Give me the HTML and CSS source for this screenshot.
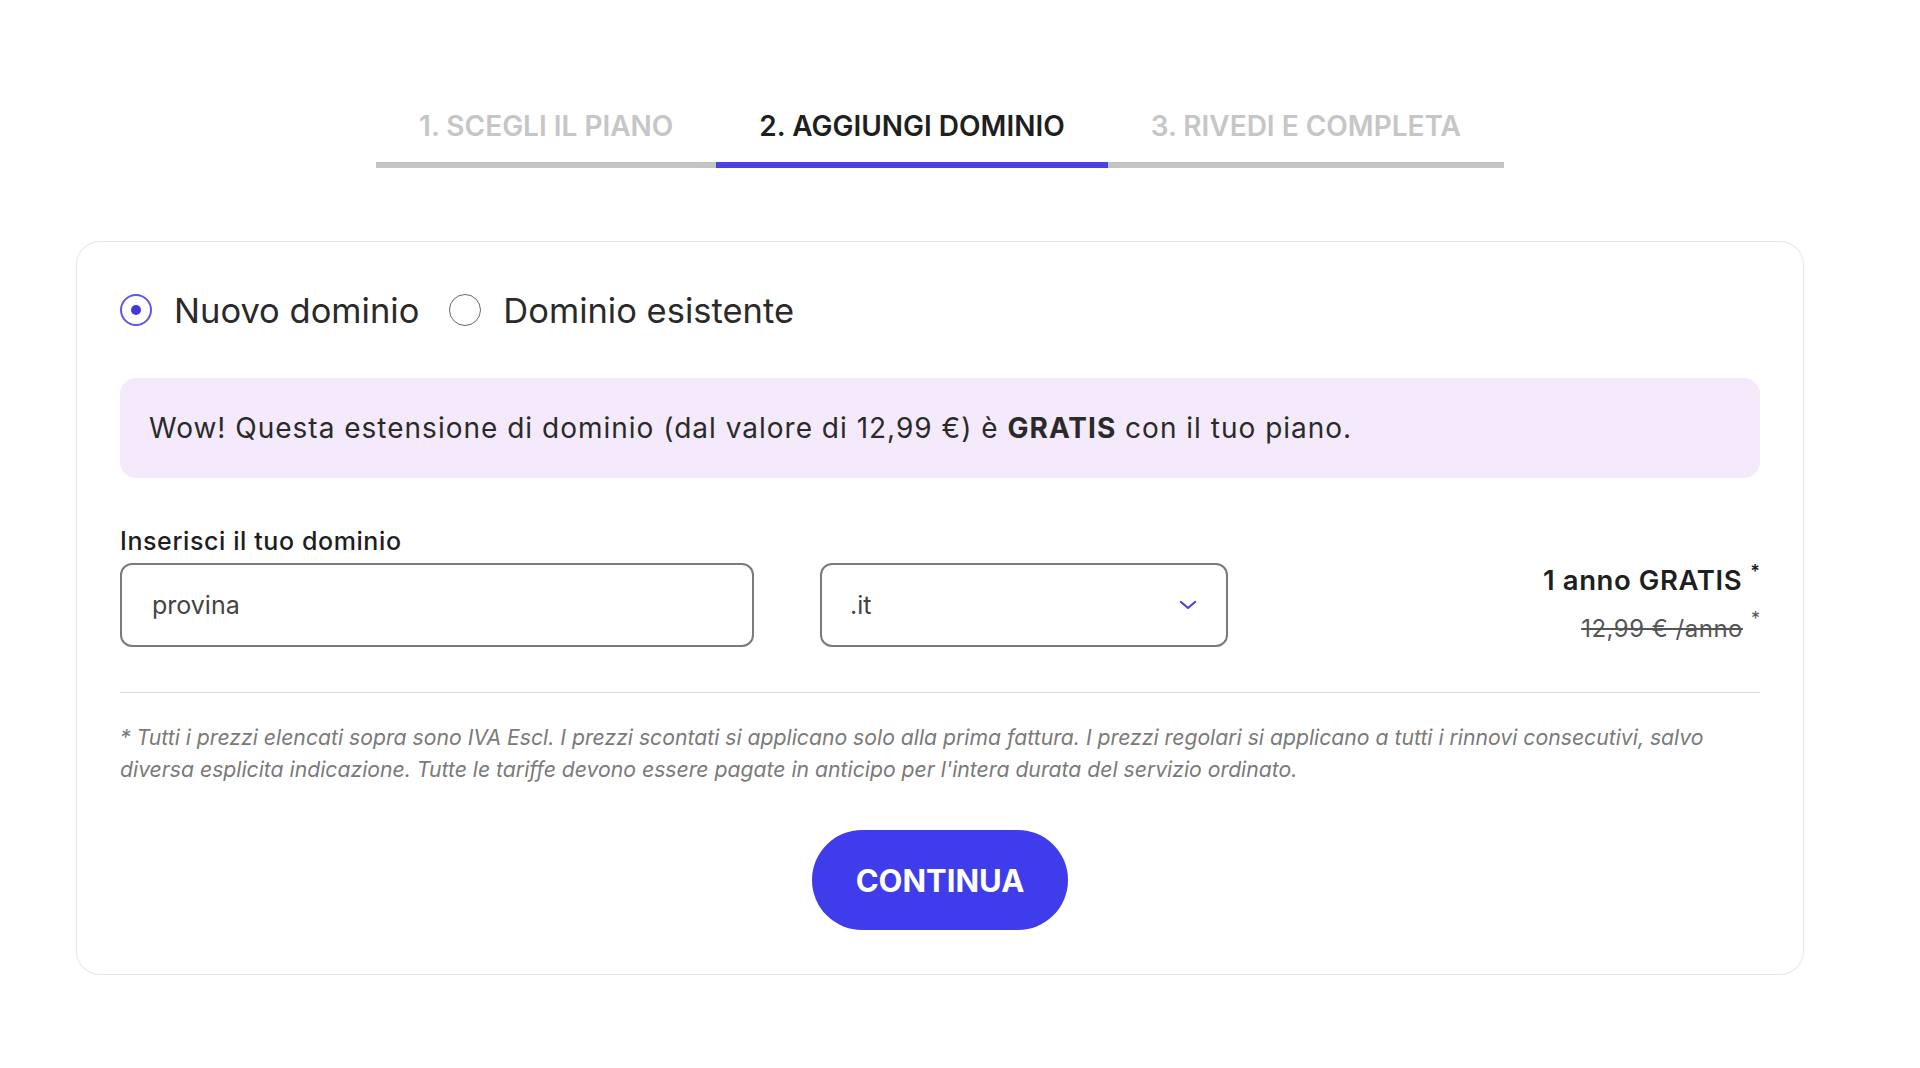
FILE: index.html
```html
<!DOCTYPE html>
<html lang="it">
<head>
  <meta charset="UTF-8">
  <meta name="viewport" content="width=device-width, initial-scale=1.0">
  <title>Aggiungi dominio</title>
  <link rel="stylesheet" href="styles.css">
</head>
<body>
  <div class="page">
    <div class="steps">
      <div class="step">1. SCEGLI IL PIANO</div>
      <div class="step step-active">2. AGGIUNGI DOMINIO</div>
      <div class="step">3. RIVEDI E COMPLETA</div>
    </div>

    <div class="card">
      <div class="radio-row">
        <label class="radio-option">
          <span class="radio radio-checked"></span>
          Nuovo dominio
        </label>
        <label class="radio-option">
          <span class="radio"></span>
          Dominio esistente
        </label>
      </div>

      <div class="promo">
        Wow! Questa estensione di dominio (dal valore di 12,99 €) è <b>GRATIS</b> con il tuo piano.
      </div>

      <div class="field-label">Inserisci il tuo dominio</div>
      <div class="domain-row">
        <div class="domain-input">provina</div>
        <div class="domain-select">
          <span>.it</span>
          <svg class="chevron" width="18" height="10" viewBox="0 0 18 10">
            <polyline points="2,2 9,8 16,2" fill="none" stroke="#4b44e0" stroke-width="2.2" stroke-linecap="round" stroke-linejoin="round"/>
          </svg>
        </div>
        <div class="price">
          <div class="price-free">1 anno GRATIS<sup>*</sup></div>
          <div class="price-old"><s>12,99 € /anno</s><sup>*</sup></div>
        </div>
      </div>

      <div class="divider"></div>

      <p class="disclaimer">* Tutti i prezzi elencati sopra sono IVA Escl. I prezzi scontati si applicano solo alla prima fattura. I prezzi regolari si applicano a tutti i rinnovi consecutivi, salvo diversa esplicita indicazione. Tutte le tariffe devono essere pagate in anticipo per l'intera durata del servizio ordinato.</p>

      <div class="actions">
        <button class="continue-btn">CONTINUA</button>
      </div>
    </div>
  </div>
</body>
</html>
```

FILE: styles.css
```css
/* Basic styling */
body {
  font-family: Inter, "Noto Sans", sans-serif;
  background-color: #fff;
  color: #222;
  margin: 0;
  padding: 0 40px 0 0;
}
.page {
  width: 1728px;
  margin: 0 auto;
  padding-top: 106px;
}

/* Steps */
.steps {
  display: flex;
  justify-content: center;
}
.step {
  padding: 0 43px 16px;
  font-size: 28px;
  font-weight: 600;
  line-height: 40px;
  color: #c6c6c6;
  border-bottom: 6px solid #c4c4c4;
}
.step-active {
  color: #1f1f1f;
  border-bottom-color: #4a42e2;
}

/* Card */
.card {
  margin-top: 73px;
  border: 1px solid #e4e4e4;
  border-radius: 24px;
  padding: 48px 43px 44px;
}
.radio-row {
  display: flex;
  align-items: center;
  gap: 30px;
  height: 40px;
}
.radio-option {
  display: flex;
  align-items: center;
  gap: 22px;
  font-size: 34.5px;
  color: #2a2a2a;
}
.radio {
  width: 32px;
  height: 32px;
  border: 1.5px solid #6a6a6a;
  border-radius: 50%;
  box-sizing: border-box;
  display: flex;
  align-items: center;
  justify-content: center;
}
.radio-checked {
  border: 2px solid #6157e6;
}
.radio-checked::after {
  content: "";
  width: 10px;
  height: 10px;
  border-radius: 50%;
  background-color: #3f38e0;
}

.promo {
  margin-top: 48px;
  padding: 30px 29px;
  line-height: 40px;
  font-size: 28px;
  letter-spacing: 1px;
  color: #2a2a2a;
  background-color: #f4eafb;
  border-radius: 16px;
}
.promo b {
  font-weight: 700;
}

.field-label {
  margin-top: 46px;
  margin-bottom: 5px;
  line-height: 34px;
  font-size: 25px;
  letter-spacing: 0.6px;
  font-weight: 500;
  color: #1e1e1e;
}
.domain-row {
  display: flex;
  align-items: center;
}
.domain-input,
.domain-select {
  height: 84px;
  box-sizing: border-box;
  border: 2px solid #7a7a7a;
  border-radius: 12px;
  display: flex;
  align-items: center;
  font-size: 25px;
  color: #444;
}
.domain-input {
  width: 634px;
  padding-left: 30px;
}
.domain-select {
  width: 408px;
  margin-left: 66px;
  padding: 0 29px 0 28px;
  justify-content: space-between;
}
.price {
  margin: -5px 0 -4px auto;
  text-align: right;
  display: flex;
  flex-direction: column;
  gap: 5px;
}
.price sup {
  font-size: 18px;
  letter-spacing: 0;
  margin-left: 8px;
  vertical-align: 12px;
  line-height: 0;
}
.price-free {
  line-height: 44px;
  font-size: 27.5px;
  letter-spacing: 0.6px;
  font-weight: 600;
  color: #1f1f1f;
}
.price-old {
  line-height: 44px;
  font-size: 24px;
  letter-spacing: 0.5px;
  color: #555;
}

.divider {
  margin-top: 45px;
  height: 1px;
  background-color: #dcdcdc;
}
.disclaimer {
  margin: 28px 0 0;
  font-size: 21.2px;
  line-height: 32px;
  font-style: italic;
  color: #7a7a7a;
}
.actions {
  margin-top: 45px;
  display: flex;
  justify-content: center;
}
.continue-btn {
  width: 256px;
  height: 100px;
  border: none;
  border-radius: 50px;
  background-color: #3f3deb;
  color: #fff;
  font-family: Inter, sans-serif;
  font-size: 31px;
  font-weight: 700;
}
```
